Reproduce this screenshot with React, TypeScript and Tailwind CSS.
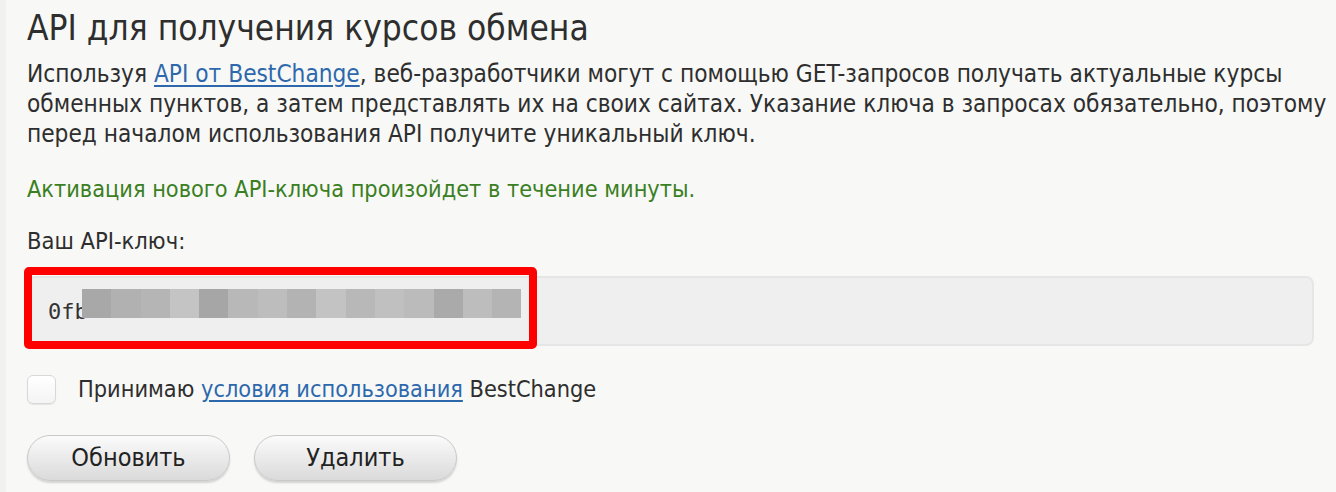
import React from "react";

const blocks = [
  "#a8a8a8", "#b1b1b1", "#b5b5b5", "#c4c4c4", "#a6a6a6", "#b8b8b8", "#bdbdbd", "#b3b3b3",
  "#c3c3c3", "#b8b8b8", "#c0c0c0", "#bbbbbb", "#aaaaaa", "#bdbdbd", "#b4b4b4",
];

export default function App() {
  return (
    <div
      className="flex w-[1336px] h-[492px] bg-[#f8f8f6] overflow-hidden"
      style={{ fontFamily: '"DejaVu Sans Condensed", "DejaVu Sans", sans-serif', fontStretch: "condensed" }}
    >
      <div className="w-[6px] bg-[#f1f1ef] shrink-0" />
      <div className="flex-1 pl-[21px] pr-[22px] pt-[6px] text-[#2e2e2e]">
        <h1 className="text-[35px] leading-[44px] text-[#2e2e2e]">API для получения курсов обмена</h1>
        <p className="mt-[9px] mr-[-22px] text-[24.2px] leading-[30px]">
          Используя{" "}
          <a className="text-[#2d68ad] underline decoration-2 underline-offset-[3px]" href="#">
            API от BestChange
          </a>
          , веб-разработчики могут с помощью GET-запросов получать актуальные курсы обменных пунктов, а затем
          представлять их на своих сайтах. Указание ключа в запросах обязательно, поэтому перед началом использования API
          получите уникальный ключ.
        </p>
        <p className="mt-[25px] text-[23.3px] leading-[30px] text-[#3a7f22]">
          Активация нового API-ключа произойдет в течение минуты.
        </p>
        <p className="mt-[22px] text-[23.5px] leading-[30px]">Ваш API-ключ:</p>
        <div className="relative mt-[20px] h-[70px] rounded-[8px] border-2 border-[#e6e6e6] bg-[#efefef] flex items-center pl-[19px]">
          <span
            className="text-[22px] text-[#333333]"
            style={{ fontFamily: '"DejaVu Sans Mono", "Liberation Mono", monospace' }}
          >
            0fb
          </span>
          <div className="absolute left-[53px] top-[11px] flex h-[29px]">
            {blocks.map((c, i) => (
              <div key={i} className="w-[29.3px] h-full" style={{ backgroundColor: c }} />
            ))}
          </div>
          <div className="absolute left-[-5px] top-[-11px] w-[513px] h-[82px] border-[8px] border-[#ff0000] rounded-[5px]" />
        </div>
        <div className="mt-[28px] flex items-center">
          <div className="w-[29px] h-[29px] rounded-[6px] border border-[#d8d8d8] bg-gradient-to-b from-[#ffffff] to-[#f4f4f4] shadow-[0_1px_1px_rgba(0,0,0,0.08)]" />
          <span className="ml-[22px] text-[23.3px] leading-[30px]">
            Принимаю{" "}
            <a className="text-[#2d68ad] underline decoration-2 underline-offset-[3px]" href="#">
              условия использования
            </a>{" "}
            BestChange
          </span>
        </div>
        <div className="mt-[31px] flex gap-[24px]">
          <button className="w-[203px] h-[46px] rounded-full border border-[#c9c9c9] bg-gradient-to-b from-[#fbfbfb] to-[#dadada] shadow-[0_2px_2px_rgba(0,0,0,0.15)] text-[25px] text-[#222222]">
            Обновить
          </button>
          <button className="w-[203px] h-[46px] rounded-full border border-[#c9c9c9] bg-gradient-to-b from-[#fbfbfb] to-[#dadada] shadow-[0_2px_2px_rgba(0,0,0,0.15)] text-[25px] text-[#222222]">
            Удалить
          </button>
        </div>
      </div>
    </div>
  );
}
